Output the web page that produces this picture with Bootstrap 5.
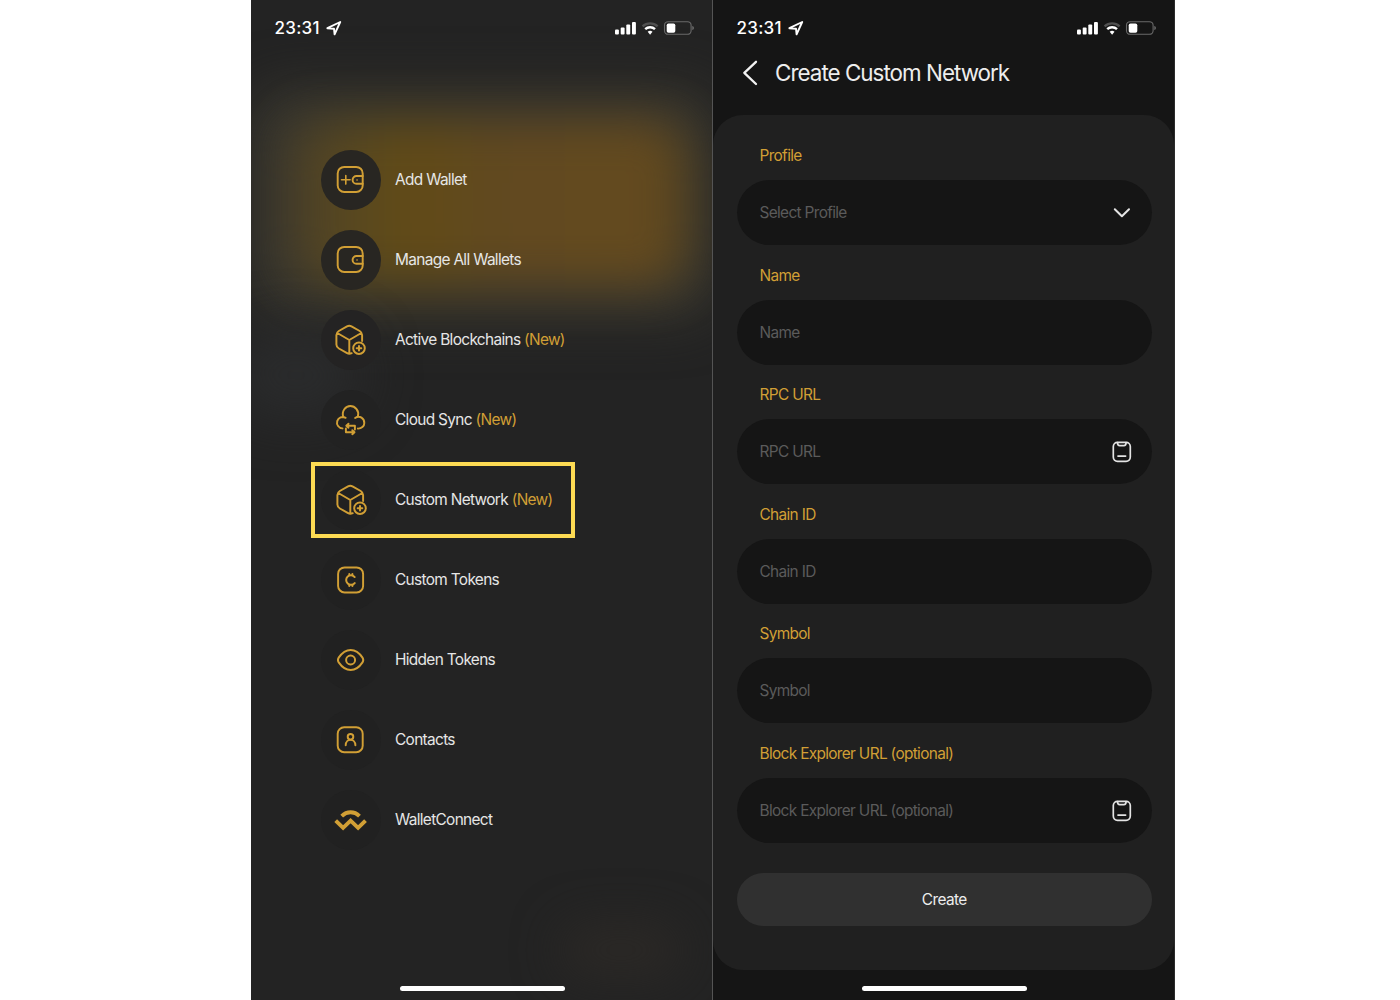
<!DOCTYPE html>
<html lang="en">
<head>
<meta charset="utf-8">
<meta name="viewport" content="width=device-width, initial-scale=1">
<title>Create Custom Network</title>
<link href="https://cdn.jsdelivr.net/npm/bootstrap@5.3.0/dist/css/bootstrap.min.css" rel="stylesheet">
<style>
  :root { --gold: #d19f35; }
  body { font-family: Inter, "Liberation Sans", sans-serif; background: #fff; color: #e6e6e6; font-size: 15.4px; letter-spacing: -.66px; line-height: 20px; }
  svg { display: block; flex: none; }
  .phones { padding-left: 251px; }
  .phone { width: 462px; height: 1000px; overflow: hidden; flex: none; }
  .phone-menu { background: #232323; border-right: 1px solid #545454; }
  .phone-form { background: #151515; border-right: 1px solid #2b2b2b; }
  .glow { position: absolute; border-radius: 40px; }
  .glow-gold { left: 38px; top: 120px; width: 400px; height: 166px; background: linear-gradient(90deg, #4b4028, #584820 16%, #624b16 30%, #614920 50%, #644a1f 88%, #5a461f); filter: blur(23px); }
  .glow-halo { left: -5px; top: 88px; width: 472px; height: 230px; background: #38362e; filter: blur(26px); }
  .glow-cool { left: -20px; top: 335px; width: 130px; height: 80px; background: #2b2c2d; filter: blur(28px); }
  .glow-warm { left: 310px; top: 925px; width: 120px; height: 50px; background: #2c2926; filter: blur(24px); }
  .statusbar { height: 56px; padding: 0 18px 0 23.5px; }
  .clock { font-size: 17px; font-weight: 550; letter-spacing: .25px; color: #fff; width: 51px; }
  .menu-list { padding: 94px 0 0 69.5px; gap: 20px; }
  .menu-row { height: 60px; gap: 14.5px; }
  .menu-icon { width: 60px; height: 60px; background: #282622; }
  .menu-row:nth-child(n+3) .menu-icon { background: #242323; }
  .menu-row:nth-child(n+4) .menu-icon { background: #222; }
  .menu-row:nth-child(n+5) .menu-icon { background: #212121; }
  .menu-icon svg { fill: none; stroke: var(--gold); stroke-width: 1.95; stroke-linecap: round; stroke-linejoin: round; transform: translateX(-.3px); }
  .tag-new, .field-label { color: var(--gold); }
  .focus-frame { position: absolute; left: -9.5px; top: -8px; width: 264px; height: 76px; border: 4px solid #fddb53; }
  .home-bar { position: absolute; bottom: 9px; left: 148.5px; width: 165px; height: 5.5px; background: #fff; border-radius: 3px; }
  .title-row { height: 34px; padding-left: 28.5px; gap: 17.5px; }
  .title-row h1 { font-size: 22.4px; font-weight: 400; letter-spacing: -.97px; color: #ededed; }
  .panel { margin-top: 25px; height: 855px; border-radius: 30px; background: #202020; padding: 30px 22px 0 23.5px; }
  .field { height: 119.5px; }
  .field-label { padding-left: 23px; height: 35px; line-height: 21.2px; }
  .field-box { height: 65px; border-radius: 33px; background: #151515; color: #5b5b5b; padding: 1px 20px 0 23px; }
  .field-box svg { fill: none; stroke: #e4e4e4; stroke-width: 1.7; stroke-linecap: round; stroke-linejoin: round; }
  .btn-create, .btn-create:hover { margin-top: 11px; height: 53px; background: #303030; color: #ededed; font-size: 15.4px; letter-spacing: -.6px; }
</style>
</head>
<body>
<svg width="0" height="0" class="position-absolute">
  <symbol id="locate" viewBox="0 0 16 16"><path d="M1.4 8.2 14.2 2 8.6 14.3 8 8.7Z" fill="none" stroke="#fff" stroke-width="1.9" stroke-linejoin="round"/></symbol>
  <symbol id="signals" viewBox="0 0 80 16">
    <g fill="#fff"><rect x="1" y="9.6" width="3.9" height="5" rx="1"/><rect x="6.7" y="7.6" width="3.9" height="7" rx="1"/><rect x="12.3" y="4.6" width="3.9" height="10" rx="1"/><rect x="18" y="1.9" width="3.9" height="12.7" rx="1"/></g>
    <g fill="none"><path d="M28.6 6.3a11 11 0 0 1 15 0" stroke="#505050" stroke-width="2.4"/><path d="M31.2 9.1a7.2 7.2 0 0 1 9.8 0" stroke="#fff" stroke-width="2.4"/></g>
    <path d="M33.7 11.8a3.8 3.8 0 0 1 4.8 0L36.1 14.7Z" fill="#fff"/>
    <rect x="50.5" y="1.7" width="26.6" height="12.6" rx="3.6" fill="none" stroke="#6a6a6a" stroke-width="1.1"/>
    <rect x="52.7" y="3.4" width="8.6" height="9.3" rx="1.8" fill="#fff"/><path d="M78.4 6c1.9.8 1.9 3.2 0 4Z" fill="#777"/>
  </symbol>
  <symbol id="cube" viewBox="0 0 60 60">
    <path d="M31 43.2c-1.7.8-3.2.8-4.6 0l-8.2-4.7c-1.7-1-2.5-2.2-2.5-4V25c0-1.8.8-3 2.4-4l8.2-4.7c1.6-.8 3-.8 4.5 0L39 21c1.6 1 2.4 2.2 2.4 4v6M16.6 23l12 7 12-7M28.6 30v13.6"/>
    <circle cx="38.3" cy="38.2" r="5.8"/><path d="M38.3 35.9v4.6M36 38.2h4.6" stroke-width="2"/>
  </symbol>
  <symbol id="clip" viewBox="0 0 20 22"><rect x="1.3" y="1.3" width="17" height="19" rx="4.2"/><path d="M5.5 1.6c0 2.2.8 3.1 2.2 3.1h4.2c1.4 0 2.2-.9 2.2-3.1M6 15.1h7.6"/></symbol>
</svg>

<div class="phones d-flex">
  <section class="phone phone-menu position-relative">
    <div class="glow glow-halo"></div><div class="glow glow-gold"></div><div class="glow glow-cool"></div><div class="glow glow-warm"></div>
    <div class="position-relative">
      <header class="statusbar d-flex align-items-center">
        <span class="clock">23:31</span><svg width="16" height="16"><use href="#locate"/></svg>
        <svg class="ms-auto" width="80" height="16"><use href="#signals"/></svg>
      </header>
      <nav class="menu-list d-flex flex-column">
        <div class="menu-row d-flex align-items-center"><span class="menu-icon rounded-circle"><svg width="60" height="60"><rect x="17" y="16.9" width="25" height="25" rx="6.5"/><path d="M42 26h-6.2a3.9 3.9 0 0 0 0 7.8H42"/><path d="M20.8 29.8h8.6M25.1 25.5v8.6M36.3 30h.1" stroke-width="1.6"/></svg></span><span>Add Wallet</span></div>
        <div class="menu-row d-flex align-items-center"><span class="menu-icon rounded-circle"><svg width="60" height="60"><rect x="17" y="16.9" width="25" height="25" rx="6.5"/><path d="M42 26h-6.2a3.9 3.9 0 0 0 0 7.8H42"/><path d="M36.3 30h.1" stroke-width="1.6"/></svg></span><span>Manage All Wallets</span></div>
        <div class="menu-row d-flex align-items-center"><span class="menu-icon rounded-circle"><svg width="60" height="60"><use href="#cube" width="60" height="60"/></svg></span><span>Active Blockchains <span class="tag-new">(New)</span></span></div>
        <div class="menu-row d-flex align-items-center"><span class="menu-icon rounded-circle"><svg width="60" height="60"><path d="M21.8 38.4a5.7 5.7 0 1 1 3.1-10.6M22.6 27.2C20.6 20.8 25 16 29.6 16c4.9 0 9.2 4.6 7.6 10.4M34.4 28c4.8-3.1 9.2.6 9.2 4.9 0 3.4-2.9 5.8-6.4 5.7"/><path d="M34.2 39.4v-3.7h-8.4M27.8 33.7l-2.2 2 2.2 2M25.2 38.5v3.7h8.4M31.6 40.2l2.2 2-2.2 2"/></svg></span><span>Cloud Sync <span class="tag-new">(New)</span></span></div>
        <div class="menu-row d-flex align-items-center position-relative"><span class="menu-icon rounded-circle"><svg width="60" height="60"><use href="#cube" x="1" width="60" height="60"/></svg></span><span>Custom Network <span class="tag-new">(New)</span></span><i class="focus-frame"></i></div>
        <div class="menu-row d-flex align-items-center"><span class="menu-icon rounded-circle"><svg width="60" height="60"><rect x="17.4" y="17.4" width="25" height="25" rx="6.5"/><path d="M34 27a4.8 4.8 0 1 0 0 6" stroke-width="2"/><path d="M28.6 23.9v1M31.7 23.9v1M28.6 35.1v1M31.7 35.1v1"/></svg></span><span>Custom Tokens</span></div>
        <div class="menu-row d-flex align-items-center"><span class="menu-icon rounded-circle"><svg width="60" height="60"><path d="M18 27.6c7-10.2 17-10.2 23.8 0 1.1 1.7 1.1 3.1 0 4.8-6.8 10.2-16.8 10.2-23.8 0-1.1-1.7-1.1-3.1 0-4.8Z"/><circle cx="29.9" cy="30" r="4.5"/></svg></span><span>Hidden Tokens</span></div>
        <div class="menu-row d-flex align-items-center"><span class="menu-icon rounded-circle"><svg width="60" height="60"><rect x="17" y="17.2" width="25" height="25" rx="6.5"/><circle cx="29.8" cy="26.8" r="2.8"/><path d="M25 35.2c.2-7.2 9.4-7.2 9.7 0"/></svg></span><span>Contacts</span></div>
        <div class="menu-row d-flex align-items-center"><span class="menu-icon rounded-circle"><svg width="60" height="60"><path d="M21 26.1c5.2-5.1 12.6-5.1 17.8 0M15 30.6l7.4 7.2 7.5-7.2 7.5 7.2 7.4-7.2" stroke-width="3.9" stroke-linecap="butt" stroke-linejoin="miter"/></svg></span><span>WalletConnect</span></div>
      </nav>
    </div>
    <div class="home-bar"></div>
  </section>

  <section class="phone phone-form position-relative">
    <header class="statusbar d-flex align-items-center">
      <span class="clock">23:31</span><svg width="16" height="16"><use href="#locate"/></svg>
      <svg class="ms-auto" width="80" height="16"><use href="#signals"/></svg>
    </header>
    <div class="title-row d-flex align-items-center">
      <svg width="16" height="26" fill="none" stroke="#f2f2f2" stroke-width="2.3" stroke-linecap="round" stroke-linejoin="round"><path d="M14 1.8 2.3 12.8 14 24"/></svg>
      <h1 class="m-0">Create Custom Network</h1>
    </div>
    <main class="panel">
      <div class="field"><div class="field-label">Profile</div><div class="field-box d-flex align-items-center justify-content-between"><span>Select Profile</span><svg width="20" height="12"><path d="M2.8 2.2 9.9 9.3 17 2.2" stroke-width="2"/></svg></div></div>
      <div class="field"><div class="field-label">Name</div><div class="field-box d-flex align-items-center">Name</div></div>
      <div class="field"><div class="field-label">RPC URL</div><div class="field-box d-flex align-items-center justify-content-between"><span>RPC URL</span><svg width="20" height="22"><use href="#clip"/></svg></div></div>
      <div class="field"><div class="field-label">Chain ID</div><div class="field-box d-flex align-items-center">Chain ID</div></div>
      <div class="field"><div class="field-label">Symbol</div><div class="field-box d-flex align-items-center">Symbol</div></div>
      <div class="field"><div class="field-label">Block Explorer URL (optional)</div><div class="field-box d-flex align-items-center justify-content-between"><span>Block Explorer URL (optional)</span><svg width="20" height="22"><use href="#clip"/></svg></div></div>
      <button type="button" class="btn btn-create rounded-pill border-0 w-100">Create</button>
    </main>
    <div class="home-bar"></div>
  </section>
</div>
<script src="https://cdn.jsdelivr.net/npm/bootstrap@5.3.0/dist/js/bootstrap.bundle.min.js"></script>
</body>
</html>
